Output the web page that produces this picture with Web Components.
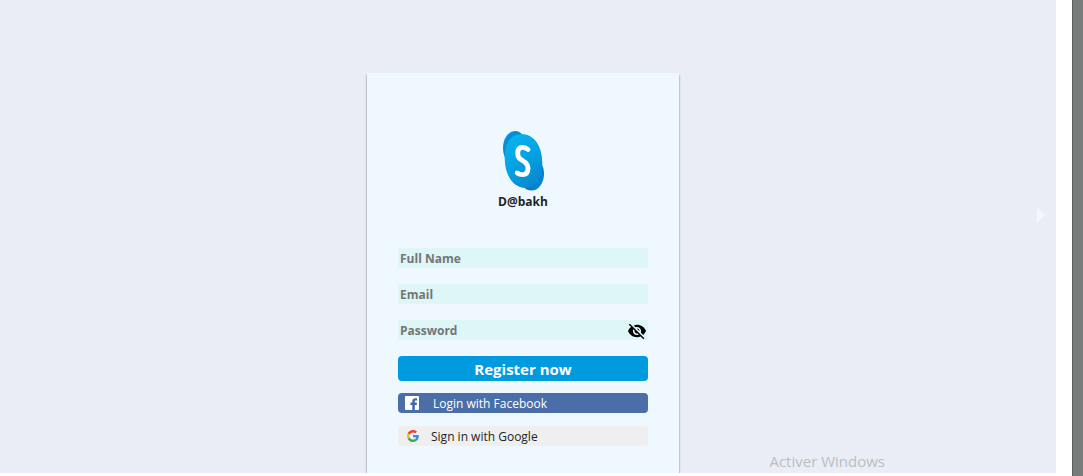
<!DOCTYPE html>
<html lang="en">
<head>
<meta charset="utf-8">
<title>D@bakh</title>
<style>
body { margin: 0; background: #fff; font-family: "Segoe UI", "Open Sans", "Noto Sans", sans-serif; color: #212529; }
</style>
</head>
<body>
<app-shell>
  <register-card>
    <brand-logo slot="brand">D@bakh</brand-logo>
    <text-field label="Full Name" type="text"></text-field>
    <text-field label="Email" type="email"></text-field>
    <text-field label="Password" type="password"><eye-toggle></eye-toggle></text-field>
    <action-button kind="primary">Register now</action-button>
    <action-button kind="facebook"><facebook-icon slot="icon"></facebook-icon>Login with Facebook</action-button>
    <action-button kind="google"><google-icon slot="icon"></google-icon>Sign in with Google</action-button>
  </register-card>
  <next-arrow slot="overlay"></next-arrow>
  <system-notice slot="overlay">Activer Windows</system-notice>
</app-shell>
<script>
const define = (name, html, setup) => {
  const template = document.createElement('template');
  template.innerHTML = html;
  customElements.define(name, class extends HTMLElement {
    constructor() {
      super();
      this.attachShadow({ mode: 'open' }).append(template.content.cloneNode(true));
    }
    connectedCallback() { if (setup) setup(this, this.shadowRoot); }
  });
};

define('app-shell', `
<style>
:host { display: flex; height: 100vh; box-sizing: border-box; padding-bottom: 3px; position: relative; overflow: hidden; background: #fff; }
main { flex: 1; display: flex; justify-content: center; overflow: hidden; background: #eaedf5; padding: 73px 10px 0 0; }
.gutter { width: 16px; }
.edge { width: 10px; margin-bottom: -3px; background: #787c7a; border-left: 1px solid #5b5f5d; }
</style>
<main><slot></slot></main><div class="gutter"></div><div class="edge"></div>
<slot name="overlay"></slot>`);

define('register-card', `
<style>
:host { display: block; width: 250px; padding: 58px 31px 0; margin-bottom: -8px; background: #eff7ff; box-shadow: 0 2px 2px #6c7480; }
form { display: flex; flex-direction: column; gap: 16px; margin-top: 35px; }
</style>
<slot name="brand"></slot><form><slot></slot></form>`);

define('brand-logo', `
<style>
:host { display: flex; flex-direction: column; align-items: center; font-size: 12px; line-height: 22px; font-weight: 700; }
svg { display: block; width: 42px; height: 60px; }
</style>
<svg viewBox="0 0 42 60" aria-hidden="true">
  <defs>
    <linearGradient id="a" x1="0" y1="0" x2="1" y2="1"><stop offset="0" stop-color="#0a9ee0"/><stop offset=".5" stop-color="#0080cc"/><stop offset="1" stop-color="#006cbf"/></linearGradient>
    <linearGradient id="b" x1="0" y1="0" x2="1" y2="1"><stop offset="0" stop-color="#0877c8"/><stop offset=".6" stop-color="#0676c8"/><stop offset="1" stop-color="#0791e0"/></linearGradient>
    <linearGradient id="c" x1=".2" y1="0" x2=".7" y2="1"><stop offset="0" stop-color="#08b4ed"/><stop offset=".5" stop-color="#04a2e2"/><stop offset="1" stop-color="#0787d0"/></linearGradient>
  </defs>
  <ellipse cx="13" cy="17" rx="12" ry="17" fill="url(#a)"/>
  <ellipse cx="29.500" cy="43" rx="12.500" ry="16.500" fill="url(#b)"/>
  <path d="M2.700 27C2.700 12 9 3.200 19 3C31 2.600 40.300 14 40.300 32C40.300 48 33 56.800 23.500 56.800C11 56.800 2.700 44 2.700 27z" fill="url(#c)"/>
  <path d="M26 18.500C24 16.800 22.500 16.300 20.500 16.400C17.300 16.500 15.600 18.800 15.700 22.500C15.900 26.600 17.500 27.700 20.500 29.500C24.500 31.800 26 33.600 26 37.200C26 41.500 23.800 43.600 20.500 43.600C18.300 43.600 16.800 43.100 15.200 42" fill="none" stroke="#fff" stroke-width="4.900" stroke-linecap="round" stroke-linejoin="round"/>
</svg>
<slot></slot>`);

define('text-field', `
<style>
:host { display: block; }
label { display: flex; align-items: center; height: 20px; background: #def6f6; }
input { flex: 1; min-width: 0; height: 20px; box-sizing: border-box; border: 0; padding: 0 2px; background: transparent; color: #212529; font: 700 12px "Segoe UI", "Open Sans", "Noto Sans", sans-serif; outline: 0; }
input::placeholder { color: #757575; opacity: 1; }
</style>
<label><input><slot></slot></label>`, (host, root) => {
  const input = root.querySelector('input');
  input.type = host.getAttribute('type');
  input.placeholder = host.getAttribute('label');
  input.setAttribute('aria-label', host.getAttribute('label'));
});

define('eye-toggle', `
<style>
:host { display: block; margin-right: 2px; }
button { display: block; border: 0; padding: 2px 0 0; background: none; }
svg { display: block; width: 18px; height: 18px; }
</style>
<button type="button" aria-label="Show password"><svg viewBox="1 1 22 22"><path d="M12 7c2.760 0 5 2.240 5 5 0 .65-.13 1.260-.36 1.830l2.920 2.920c1.510-1.260 2.700-2.890 3.430-4.750-1.730-4.390-6-7.500-11-7.500-1.400 0-2.740.25-3.980.7l2.160 2.160C10.740 7.130 11.350 7 12 7zM2 4.270l2.280 2.280.46.46C3.080 8.300 1.780 10.020 1 12c1.730 4.390 6 7.500 11 7.500 1.550 0 3.030-.3 4.380-.84l.42.42L19.730 22 21 20.730 3.270 3 2 4.270zM7.530 9.800l1.550 1.550c-.05.21-.08.43-.08.65 0 1.660 1.340 3 3 3 .22 0 .44-.03.65-.08l1.550 1.550c-.67.33-1.410.53-2.200.53-2.760 0-5-2.240-5-5 0-.79.2-1.530.53-2.200zm4.310-.78l3.150 3.150.02-.16c0-1.660-1.340-3-3-3l-.17.01z"/></svg></button>`);

define('action-button', `
<style>
:host { display: block; }
:host([kind="facebook"]) { margin-top: -4px; }
:host([kind="google"]) { margin-top: -3px; }
button { display: flex; align-items: center; width: 100%; height: 20px; border: 0; border-radius: 4px; padding: 0 7px; font: 400 12px "Segoe UI", "Open Sans", "Noto Sans", sans-serif; }
.primary { justify-content: center; height: 25px; background: #009bde; color: #fff; font-size: 15px; font-weight: 700; }
.facebook { gap: 14px; background: #4b6ea9; color: #fff; }
.google { gap: 10px; background: #efefef; color: #212529; }
</style>
<button><slot name="icon"></slot><span><slot></slot></span></button>`, (host, root) => {
  const button = root.querySelector('button');
  button.className = host.getAttribute('kind');
  button.type = button.className === 'primary' ? 'submit' : 'button';
});

define('facebook-icon', `
<style>:host { display: block; } svg { display: block; width: 14px; height: 14px; }</style>
<svg viewBox="0 0 14 14" aria-hidden="true"><rect width="14" height="14" rx="1" fill="#fff"/><path d="M7.300 14V8.900H5.500V6.600h1.800V5.200C7.300 3.200 8.500 2.200 10.300 2.200c.9 0 1.600.1 1.800.1v2.200h-1.200c-1 0-1.100.5-1.100 1.100v1H12l-.3 2.300H9.800V14z" fill="#4267ad"/></svg>`);

define('google-icon', `
<style>:host { display: block; } svg { display: block; width: 16px; height: 16px; }</style>
<svg viewBox="-8 -8 64 64" aria-hidden="true"><path fill="#EA4335" d="M24 9.500c3.540 0 6.710 1.220 9.210 3.600l6.850-6.850C35.900 2.380 30.470 0 24 0 14.620 0 6.510 5.380 2.560 13.220l7.980 6.190C12.430 13.720 17.740 9.500 24 9.500z"/><path fill="#4285F4" d="M46.980 24.550c0-1.570-.15-3.090-.38-4.550H24v9.020h12.940c-.58 2.960-2.260 5.480-4.780 7.180l7.730 6c4.510-4.180 7.090-10.360 7.090-17.650z"/><path fill="#FBBC05" d="M10.530 28.590c-.48-1.450-.76-2.990-.76-4.590s.27-3.140.76-4.590l-7.980-6.190C.92 16.460 0 20.120 0 24c0 3.880.92 7.540 2.560 10.780l7.970-6.190z"/><path fill="#34A853" d="M24 48c6.480 0 11.930-2.130 15.890-5.810l-7.730-6c-2.150 1.450-4.920 2.300-8.160 2.300-6.260 0-11.570-4.220-13.470-9.910l-7.980 6.190C6.510 42.620 14.620 48 24 48z"/></svg>`);

define('next-arrow', `
<style>
:host { position: absolute; right: 37px; top: 207px; }
svg { display: block; width: 9px; height: 16px; }
</style>
<svg viewBox="0 0 9 16" aria-hidden="true"><path d="M0 0l8 8-8 8z" fill="#f4f6fa"/></svg>`);

define('system-notice', `
<style>:host { position: absolute; right: 198px; bottom: 4px; font-size: 15px; line-height: 22px; color: #bbbdc2; }</style>
<slot></slot>`);
</script>
</body>
</html>
